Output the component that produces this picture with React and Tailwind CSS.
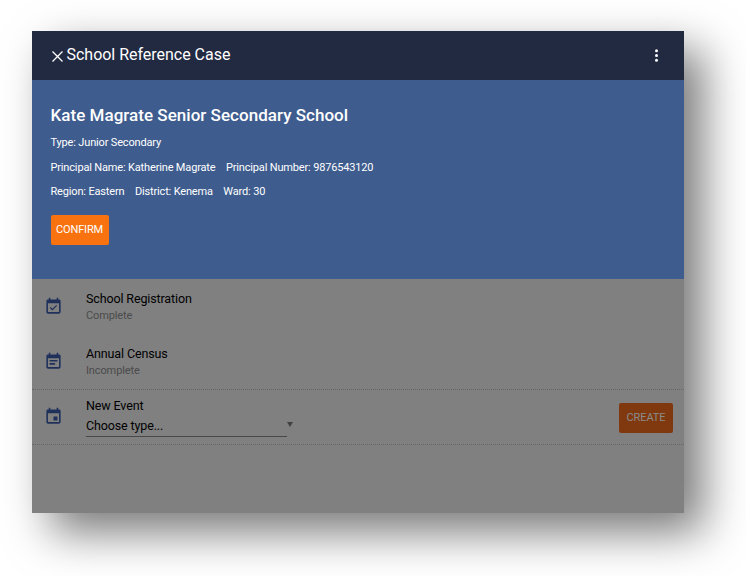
import { MdEvent, MdEventAvailable, MdEventNote } from "react-icons/md";

function StatusRow({ icon: Icon, title, status, className }) {
  return (
    <div className={`flex pl-[11.5px] ${className}`}>
      <Icon className="mt-[6px] size-[19px] shrink-0 text-[#1f315b]" />
      <div className="ml-[23.5px]">
        <div className="text-[12.5px] leading-[16px] tracking-[-0.13px] text-black">{title}</div>
        <div className="mt-px text-[11px] leading-[16px] tracking-[-0.12px] text-[#4b4b4b]">{status}</div>
      </div>
    </div>
  );
}

export default function App() {
  return (
    <div className="h-[576px] w-[746px] overflow-hidden bg-white pt-[31px] pl-[32px] font-['Roboto',sans-serif]">
      <div className="flex h-[482px] w-[652px] flex-col bg-[#808080] shadow-[19px_19px_42px_rgba(0,0,0,0.53)]">
        <header className="flex h-[49px] shrink-0 items-center bg-[#222a42] pl-[20px] text-white">
          <svg className="mt-[2px] size-[11px]" viewBox="0 0 11 11" fill="none" stroke="currentColor" strokeWidth="1.3">
            <path d="M.5.5l10 10M10.5.5l-10 10" />
          </svg>
          <h1 className="mb-[2px] ml-[3.5px] text-[16px] leading-[20px] tracking-[-0.02px]">School Reference Case</h1>
          <svg className="mr-[26px] ml-auto h-[13px] w-[3px]" viewBox="0 0 3 13" fill="currentColor">
            <circle cx="1.5" cy="1.8" r="1.5" />
            <circle cx="1.5" cy="6.5" r="1.5" />
            <circle cx="1.5" cy="11.2" r="1.5" />
          </svg>
        </header>

        <section className="h-[199px] shrink-0 bg-[#3e5c8e] pt-[24px] pl-[18.5px] text-[11px] leading-[16px] tracking-[-0.16px] text-white">
          <h2 className="text-[17px] leading-[22px] font-medium tracking-[0.03px]">Kate Magrate Senior Secondary School</h2>
          <p className="mt-[9px]">Type: Junior Secondary</p>
          <div className="mt-[9px] flex gap-[10.5px]">
            <span>Principal Name: Katherine Magrate</span>
            <span>Principal Number: 9876543120</span>
          </div>
          <div className="mt-[8px] flex gap-[10.5px]">
            <span>Region: Eastern</span>
            <span>District: Kenema</span>
            <span>Ward: 30</span>
          </div>
          <button className="mt-[15px] flex h-[30px] w-[58px] items-center justify-center rounded-[2px] bg-[#f87310] text-[11px]">
            CONFIRM
          </button>
        </section>

        <StatusRow icon={MdEventAvailable} title="School Registration" status="Complete" className="h-[55px] pt-[12px]" />
        <StatusRow icon={MdEventNote} title="Annual Census" status="Incomplete" className="h-[55px] pt-[12px]" />

        <div className="flex h-[56px] border-y border-dotted border-[#666666] pl-[11.5px]">
          <MdEvent className="mt-[17px] size-[19px] shrink-0 text-[#1f315b]" />
          <div className="ml-[23.5px] pt-[8px] text-[12.5px] tracking-[-0.13px] text-black">
            <div className="leading-[16px]">New Event</div>
            <div className="mt-[2px] flex">
              <div className="h-[21px] w-[201px] border-b border-[#484848] leading-[19px]">Choose type...</div>
              <svg className="mt-[6px] h-[5px] w-[6px]" viewBox="0 0 6 5" fill="#414141">
                <path d="M0 0h6L3 5z" />
              </svg>
            </div>
          </div>
          <button className="mt-[13px] mr-[11px] ml-auto flex h-[30px] w-[54px] items-center justify-center rounded-[2px] bg-[#80390f] text-[11px] tracking-[-0.1px] text-[#8b8b8b]">
            CREATE
          </button>
        </div>
      </div>
    </div>
  );
}
